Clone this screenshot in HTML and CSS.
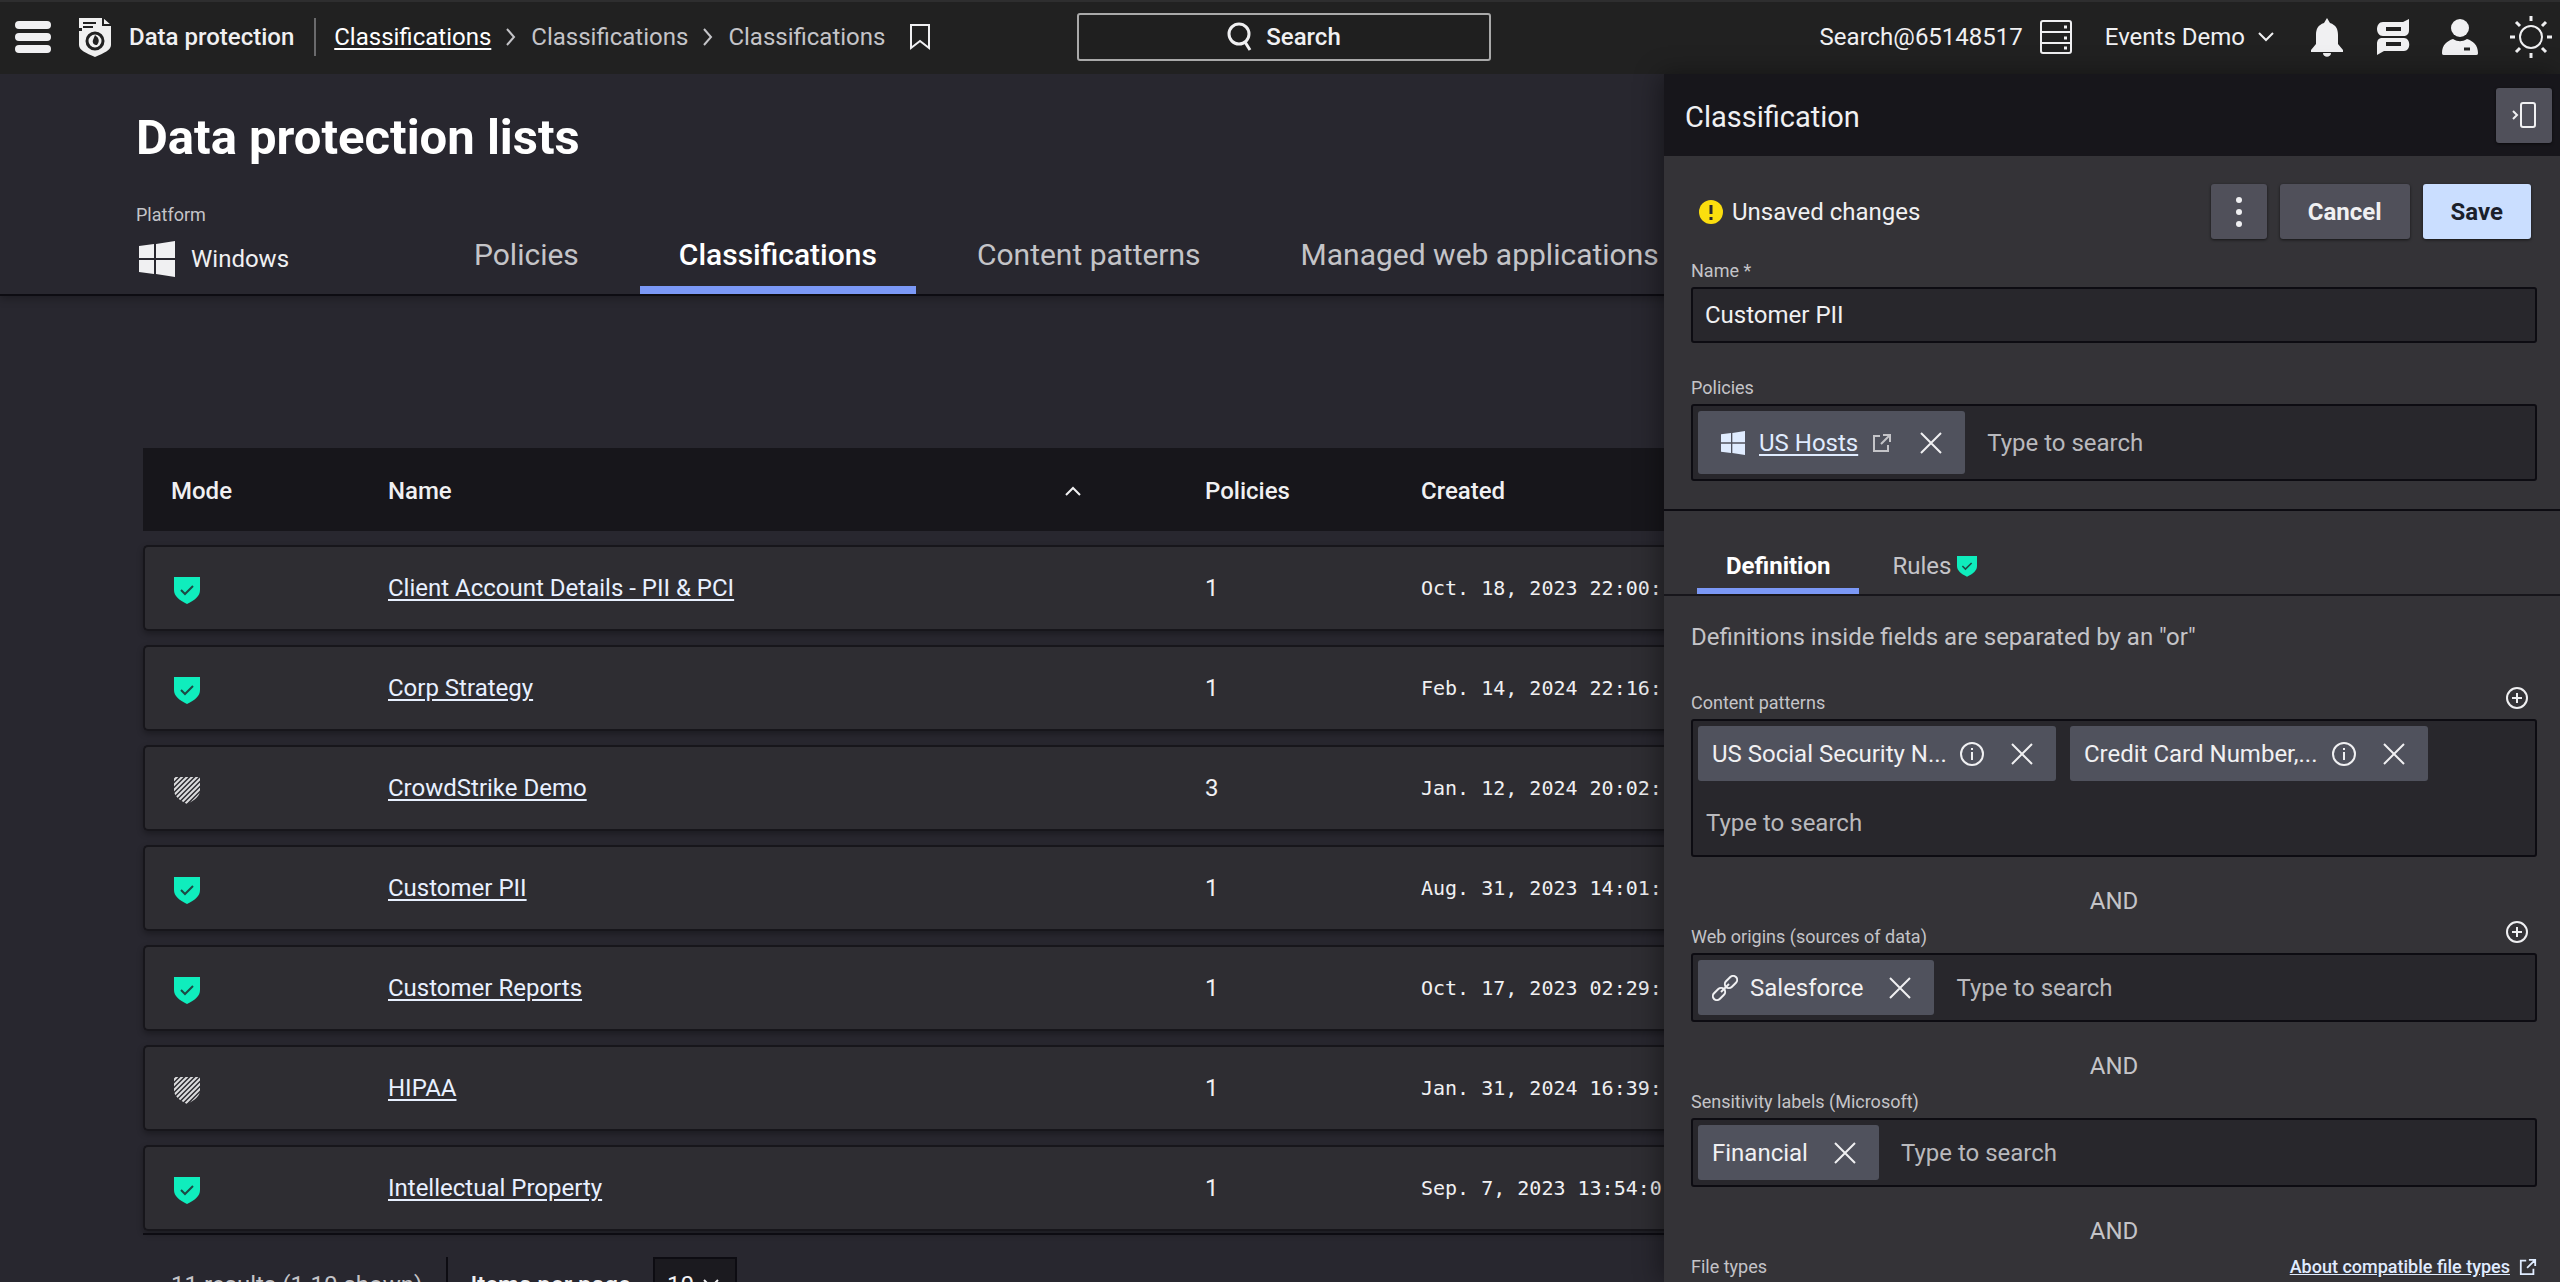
FILE: index.html
```html
<!DOCTYPE html>
<html lang="en">
<head>
<meta charset="utf-8">
<title>Data protection lists</title>
<link rel="stylesheet" href="styles.css">
</head>
<body>
<svg class="defs" aria-hidden="true">
  <symbol id="chevron" viewBox="0 0 10 20"><path d="M1 2l7 8-7 8" fill="none" stroke="currentColor" stroke-width="2"/></symbol>
  <symbol id="shield-on" viewBox="0 0 26 28"><path d="M0 1h26v13c0 6-5 10-13 14C5 24 0 20 0 14z" fill="#0fedbd"/><path d="M7 14l4 4 8-8" fill="none" stroke="#1d4a45" stroke-width="2"/></symbol>
  <symbol id="shield-off" viewBox="0 0 26 28"><clipPath id="shield-clip"><path d="M0 1h26v13c0 6-5 10-13 14C5 24 0 20 0 14z"/></clipPath><path clip-path="url(#shield-clip)" d="M-2 6L6-2M-2 11L11-2M-2 16L16-2M-2 21L21-2M-2 26L26-2M-1 30L31-2M4 30L31 3M9 30L31 8M14 30L31 13" fill="none" stroke="#dcdcde" stroke-width="2"/></symbol>
  <symbol id="windows" viewBox="0 0 36 36"><path d="M0 5l15-2v14H0zM17 3l19-3v17H17zM0 19h15v14L0 31zM17 19h19v17l-19-3z" fill="currentColor"/></symbol>
  <symbol id="external" viewBox="0 0 20 20"><path d="M8 3H2v15h14v-6M11 2h7v7M18 2l-9 9" fill="none" stroke="currentColor" stroke-width="2"/></symbol>
  <symbol id="close" viewBox="0 0 22 22"><path d="M1 1l20 20M21 1L1 21" fill="none" stroke="currentColor" stroke-width="2"/></symbol>
  <symbol id="info" viewBox="0 0 26 26"><circle cx="13" cy="13" r="11" fill="none" stroke="currentColor" stroke-width="2"/><path d="M13 11v8M13 7v2" fill="none" stroke="currentColor" stroke-width="2"/></symbol>
  <symbol id="plus" viewBox="0 0 24 24"><circle cx="12" cy="12" r="10" fill="none" stroke="currentColor" stroke-width="2"/><path d="M12 7v10M7 12h10" stroke="currentColor" stroke-width="2"/></symbol>
</svg>

<header class="topbar">
  <div class="trail">
    <button class="icon-btn" aria-label="Menu"><svg width="36" height="32"><rect width="36" height="8" rx="4" fill="currentColor"/><rect y="12" width="36" height="8" rx="4" fill="currentColor"/><rect y="24" width="36" height="8" rx="4" fill="currentColor"/></svg></button>
    <svg class="logo" width="34" height="40" viewBox="0 0 34 40"><path d="M1 1h24l8 7v20c0 5-7 8-16 12C8 36 1 33 1 28V14h3V11H1z" fill="#f0f0f0"/><path d="M25 0v8h9" fill="none" stroke="#212121" stroke-width="2"/><path d="M5 6h13M5 10h10" stroke="#212121" stroke-width="2"/><circle cx="17" cy="24" r="8" fill="none" stroke="#212121" stroke-width="3"/><path d="M17 18c4 3 5 6 2 10-3 0-5-2-4-5" fill="#212121"/></svg>
    <span class="product">Data protection</span>
    <nav class="crumbs" aria-label="Breadcrumb">
      <a href="#">Classifications</a>
      <svg width="10" height="20"><use href="#chevron"/></svg>
      <span>Classifications</span>
      <svg width="10" height="20"><use href="#chevron"/></svg>
      <span>Classifications</span>
    </nav>
    <button class="icon-btn bookmark" aria-label="Bookmark"><svg width="22" height="28" viewBox="0 0 22 28"><path d="M2 2h18v23l-9-7-9 7z" fill="none" stroke="currentColor" stroke-width="2"/></svg></button>
  </div>
  <button class="search"><svg width="26" height="30" viewBox="0 0 26 30"><circle cx="13" cy="12" r="10" fill="none" stroke="currentColor" stroke-width="3"/><path d="M19 20l5 8" stroke="currentColor" stroke-width="3"/></svg>Search</button>
  <div class="tools">
    <span>Search@65148517</span>
    <svg class="server" width="34" height="36" viewBox="0 0 34 36"><rect x="2" y="2" width="30" height="32" rx="2" fill="none" stroke="currentColor" stroke-width="2"/><path d="M2 13h30M2 24h30" stroke="currentColor" stroke-width="2"/><path d="M25 8h3M25 19h3M25 29h3" stroke="currentColor" stroke-width="3"/></svg>
    <button class="account">Events Demo<svg width="16" height="10" viewBox="0 0 16 10"><path d="M1 1l7 7 7-7" fill="none" stroke="currentColor" stroke-width="2"/></svg></button>
    <button class="icon-btn" aria-label="Notifications"><svg width="34" height="40" viewBox="0 0 34 40"><path d="M17 1l3 5c6 2 8 6 8 12v9l5 6v2H1v-2l5-6v-9c0-6 2-10 8-12zM13 36h8c0 5-8 5-8 0z" fill="currentColor"/></svg></button>
    <button class="icon-btn" aria-label="Messages"><svg width="34" height="38" viewBox="0 0 34 38"><path fill-rule="evenodd" d="M7 4h20l6-3v11c0 4-2 6-6 6H7c-8 0-8-14 0-14zm3 5v4h15V9zM6 20h22c7 0 7 13 0 13H8l-7 4V26c0-4 2-6 5-6zm4 4v4h15v-4z" fill="currentColor"/></svg></button>
    <button class="icon-btn" aria-label="Profile"><svg width="36" height="38" viewBox="0 0 36 38"><ellipse cx="18" cy="10" rx="9" ry="9" fill="currentColor"/><path d="M0 35c0-8 5-12 11-14 5 3 9 3 14 0 6 2 11 6 11 14 0 2-1 2-3 2H3c-2 0-3 0-3-2z" fill="currentColor"/><path d="M22 31h6" stroke="#212121" stroke-width="3"/></svg></button>
    <button class="icon-btn" aria-label="Theme"><svg width="42" height="42" viewBox="0 0 42 42" fill="none" stroke="currentColor" stroke-width="2"><circle cx="21" cy="21" r="11"/><path d="M21 0v5M21 37v5M0 21h5M37 21h5M6 6l4 4M32 32l4 4M6 36l4-4M32 10l4-4" stroke-width="3"/></svg></button>
  </div>
</header>

<div class="workspace">
  <main>
    <div class="page-head">
      <h1>Data protection lists</h1>
      <div class="page-nav">
        <div class="platform">
          <span class="label">Platform</span>
          <span class="platform-value"><svg width="36" height="36"><use href="#windows"/></svg>Windows</span>
        </div>
        <nav class="tabs">
          <a href="#">Policies</a>
          <a href="#" class="active">Classifications</a>
          <a href="#">Content patterns</a>
          <a href="#">Managed web applications</a>
        </nav>
      </div>
    </div>

    <div class="list">
      <table>
        <colgroup><col class="col-mode"><col class="col-name"><col class="col-policies"><col></colgroup>
        <thead>
          <tr><th>Mode</th><th><button class="sort">Name<svg width="16" height="10" viewBox="0 0 16 10"><path d="M1 9l7-7 7 7" fill="none" stroke="currentColor" stroke-width="2"/></svg></button></th><th>Policies</th><th>Created</th></tr>
        </thead>
        <tbody>
          <tr><td><svg class="shield"><use href="#shield-on"/></svg></td><td><a href="#">Client Account Details - PII &amp; PCI</a></td><td>1</td><td class="date">Oct. 18, 2023 22:00:</td></tr>
          <tr><td><svg class="shield"><use href="#shield-on"/></svg></td><td><a href="#">Corp Strategy</a></td><td>1</td><td class="date">Feb. 14, 2024 22:16:</td></tr>
          <tr><td><svg class="shield"><use href="#shield-off"/></svg></td><td><a href="#">CrowdStrike Demo</a></td><td>3</td><td class="date">Jan. 12, 2024 20:02:</td></tr>
          <tr><td><svg class="shield"><use href="#shield-on"/></svg></td><td><a href="#">Customer PII</a></td><td>1</td><td class="date">Aug. 31, 2023 14:01:</td></tr>
          <tr><td><svg class="shield"><use href="#shield-on"/></svg></td><td><a href="#">Customer Reports</a></td><td>1</td><td class="date">Oct. 17, 2023 02:29:</td></tr>
          <tr><td><svg class="shield"><use href="#shield-off"/></svg></td><td><a href="#">HIPAA</a></td><td>1</td><td class="date">Jan. 31, 2024 16:39:</td></tr>
          <tr><td><svg class="shield"><use href="#shield-on"/></svg></td><td><a href="#">Intellectual Property</a></td><td>1</td><td class="date">Sep. 7, 2023 13:54:0</td></tr>
        </tbody>
      </table>
      <div class="pager">
        <span class="results">11 results (1-10 shown)</span>
        <label for="per-page">Items per page</label>
        <span class="select"><select id="per-page"><option>10</option></select><svg width="16" height="10" viewBox="0 0 16 10"><path d="M1 1l7 7 7-7" fill="none" stroke="currentColor" stroke-width="2"/></svg></span>
      </div>
    </div>
  </main>

  <aside class="panel">
    <div class="panel-head">
      <h2>Classification</h2>
      <button class="btn square" aria-label="Collapse panel"><svg width="26" height="26" viewBox="0 0 26 26" fill="none" stroke="currentColor" stroke-width="2"><rect x="10" y="1" width="14" height="24" rx="2"/><path d="M2 9l4 4-4 4"/></svg></button>
    </div>

    <section class="summary">
      <div class="actions">
        <span class="unsaved"><svg width="26" height="26" viewBox="0 0 26 26"><circle cx="13" cy="13" r="12" fill="#fbde0e"/><path d="M13 6v9M13 18v3" stroke="#28272c" stroke-width="3"/></svg>Unsaved changes</span>
        <button class="btn square" aria-label="More actions"><svg width="8" height="32"><circle cx="4" cy="4" r="3" fill="currentColor"/><circle cx="4" cy="16" r="3" fill="currentColor"/><circle cx="4" cy="28" r="3" fill="currentColor"/></svg></button>
        <button class="btn">Cancel</button>
        <button class="btn primary">Save</button>
      </div>
      <div class="label-row"><label class="label" for="name">Name *</label></div>
      <input class="box text" id="name" value="Customer PII">
      <div class="label-row policies-label"><label class="label" for="policies">Policies</label></div>
      <div class="box">
        <span class="chip tall"><svg width="24" height="24"><use href="#windows"/></svg><a href="#">US Hosts</a><svg class="muted" width="20" height="20"><use href="#external"/></svg><button class="icon-btn remove" aria-label="Remove US Hosts"><svg width="22" height="22"><use href="#close"/></svg></button></span>
        <input id="policies" placeholder="Type to search">
      </div>
    </section>

    <nav class="panel-tabs">
      <a href="#" class="active">Definition</a>
      <a href="#">Rules<svg width="20" height="22"><use href="#shield-on"/></svg></a>
    </nav>

    <section class="definition">
      <p>Definitions inside fields are separated by an "or"</p>

      <div class="label-row"><label class="label" for="patterns">Content patterns</label><button class="icon-btn add" aria-label="Add content pattern"><svg width="24" height="24"><use href="#plus"/></svg></button></div>
      <div class="box">
        <span class="chip wide"><span class="chip-text">US Social Security N...</span><svg width="26" height="26"><use href="#info"/></svg><button class="icon-btn remove" aria-label="Remove US Social Security"><svg width="22" height="22"><use href="#close"/></svg></button></span>
        <span class="chip wide"><span class="chip-text">Credit Card Number,...</span><svg width="26" height="26"><use href="#info"/></svg><button class="icon-btn remove" aria-label="Remove Credit Card Number"><svg width="22" height="22"><use href="#close"/></svg></button></span>
        <input id="patterns" placeholder="Type to search">
      </div>
      <div class="and">AND</div>

      <div class="label-row"><label class="label" for="origins">Web origins (sources of data)</label><button class="icon-btn add" aria-label="Add web origin"><svg width="24" height="24"><use href="#plus"/></svg></button></div>
      <div class="box">
        <span class="chip"><svg width="26" height="26" viewBox="0 0 26 26" fill="none" stroke="currentColor" stroke-width="2"><rect x="-4" y="-7" width="8" height="14" rx="4" transform="translate(19 7) rotate(45)"/><rect x="-4" y="-7" width="8" height="14" rx="4" transform="translate(7 19) rotate(45)"/><path d="M9 17l8-8"/></svg>Salesforce<button class="icon-btn remove" aria-label="Remove Salesforce"><svg width="22" height="22"><use href="#close"/></svg></button></span>
        <input id="origins" placeholder="Type to search">
      </div>
      <div class="and">AND</div>

      <div class="label-row"><label class="label" for="labels">Sensitivity labels (Microsoft)</label></div>
      <div class="box">
        <span class="chip">Financial<button class="icon-btn remove" aria-label="Remove Financial"><svg width="22" height="22"><use href="#close"/></svg></button></span>
        <input id="labels" placeholder="Type to search">
      </div>
      <div class="and">AND</div>

      <div class="label-row"><span class="label">File types</span><span class="about"><a href="#">About compatible file types</a><svg width="18" height="18"><use href="#external"/></svg></span></div>
    </section>
  </aside>
</div>
</body>
</html>
```
FILE: styles.css
```css
* { box-sizing: border-box; }

body {
  margin: 0;
  height: 100vh;
  display: flex;
  flex-direction: column;
  overflow: hidden;
  background: #28272f;
  color: #f0f0f2;
  font: 24px/32px Roboto, "Liberation Sans", sans-serif;
}

svg { display: block; flex: none; }
.defs { position: absolute; width: 0; height: 0; }
button, input, select { font: inherit; color: inherit; }
button { cursor: pointer; }
a { color: inherit; }
h1, h2, p { margin: 0; }
.icon-btn { display: block; padding: 0; border: 0; background: none; }
.label { font-size: 18px; line-height: 24px; color: #c4c4c8; }

/* Top bar */
.topbar {
  display: grid;
  grid-template-columns: 1fr 414px 1fr;
  align-items: center;
  flex: none;
  height: 74px;
  padding: 0 8px 2px 15px;
  background: #212121;
  border-top: 2px solid #2e2e2f;
  white-space: nowrap;
}
.trail { display: flex; align-items: center; }
.logo { margin-left: 27px; }
.product {
  margin-left: 17px;
  padding-right: 20px;
  border-right: 2px solid #6a6a6c;
  line-height: 38px;
  font-weight: 500;
}
.crumbs { display: flex; align-items: center; gap: 15px; margin-left: 18px; color: #c4c4c8; }
.crumbs a { color: #fff; text-underline-offset: 3px; }
.bookmark { margin-left: 24px; }
.search {
  display: flex;
  align-items: center;
  justify-content: center;
  gap: 14px;
  height: 48px;
  border: 2px solid #a9a9a9;
  border-radius: 3px;
  background: #1f1f1f;
  font-weight: 500;
}
.tools { display: flex; align-items: center; justify-content: flex-end; gap: 32px; }
.server { margin-left: -16px; }
.account { display: flex; align-items: center; gap: 13px; padding: 0 4px 0 0; border: 0; background: none; }

/* Main page */
.workspace { position: relative; flex: 1; min-height: 0; }
main { height: 100%; overflow: hidden; }
.page-head {
  padding: 36px 0 0 136px;
  border-bottom: 2px solid #0d0c12;
  box-shadow: 0 3px 8px rgba(0, 0, 0, .25);
}
h1 { font-size: 49px; line-height: 56px; font-weight: 700; color: #fff; }
.page-nav { display: flex; align-items: flex-end; margin-top: 37px; }
.platform { display: flex; flex-direction: column; gap: 14px; width: 299px; padding-bottom: 17px; }
.platform-value { display: flex; align-items: center; gap: 16px; line-height: 36px; padding-left: 3px; }
.tabs { display: flex; gap: 22px; font-size: 30px; line-height: 36px; white-space: nowrap; }
.tabs a {
  padding: 0 39px 13px;
  border-bottom: 8px solid transparent;
  color: #c4c4c8;
  text-decoration: none;
}
.tabs .active { color: #fff; font-weight: 500; border-color: #7b98f6; }

/* List */
.list { padding: 152px 48px 0 143px; }
table {
  width: 100%;
  margin: -14px 0;
  table-layout: fixed;
  border-collapse: separate;
  border-spacing: 0 14px;
}
.col-mode { width: 217px; }
.col-name { width: 817px; }
.col-policies { width: 216px; }
th { height: 83px; padding: 2px 0 0 28px; background: #17161b; text-align: left; font-weight: 500; }
.sort {
  display: flex;
  align-items: center;
  justify-content: space-between;
  width: 100%;
  padding: 0 96px 0 0;
  border: 0;
  background: none;
}
tbody tr { border-radius: 5px; box-shadow: 0 3px 6px rgba(0, 0, 0, .3); }
td {
  height: 86px;
  padding: 0 0 0 28px;
  background: #2e2d32;
  border: 2px solid #17161b;
  border-width: 2px 0;
}
td:first-child { padding: 4px 0 0 29px; border-left-width: 2px; border-radius: 5px 0 0 5px; }
td a { color: #e8f0ff; text-underline-offset: 3px; }
.date { font: 20px/32px "DejaVu Sans Mono", "Liberation Mono", monospace; }
.shield { width: 26px; height: 28px; }
.pager {
  display: flex;
  align-items: center;
  gap: 22px;
  position: relative;
  margin-top: 2px;
  padding: 22px 0 20px 28px;
  border-top: 2px solid #0d0c12;
}
.pager label { font-weight: 500; }
.results { padding-right: 24px; border-right: 2px solid #0d0c12; line-height: 56px; color: #c4c4c8; }
.select { position: relative; }
.select select {
  appearance: none;
  width: 84px;
  height: 56px;
  padding: 0 12px;
  border: 2px solid #0d0c12;
  background: #1b1a1f;
}
.select svg { position: absolute; right: 18px; top: 22px; pointer-events: none; }

/* Side panel */
.panel {
  position: absolute;
  top: 0;
  right: 0;
  bottom: 0;
  width: 35%;
  overflow: hidden;
  background: #343337;
  box-shadow: -4px 0 24px rgba(0, 0, 0, .4);
}
.panel-head {
  display: flex;
  align-items: center;
  justify-content: space-between;
  height: 82px;
  padding: 0 8px 0 21px;
  background: #17161b;
}
h2 { padding-top: 3px; font-size: 29px; line-height: 36px; font-weight: 400; }
.btn {
  height: 55px;
  padding: 0 28px;
  border: 0;
  border-radius: 3px;
  background: #50505a;
  box-shadow: 0 1px 3px rgba(0, 0, 0, .6);
  font-weight: 700;
}
.btn.square { display: flex; align-items: center; justify-content: center; width: 56px; padding: 0; }
.btn.primary { background: #cadeff; color: #1b1f2b; }
.summary { padding: 28px 23px 28px 27px; border-bottom: 2px solid #0d0c12; }
.actions { display: flex; gap: 13px; margin-bottom: 20px; padding: 0 6px 0 7px; }
.unsaved { display: flex; align-items: center; gap: 8px; margin-right: auto; }
.label-row { display: flex; justify-content: space-between; height: 24px; margin-bottom: 4px; }
.policies-label { margin-top: 33px; }
.add { height: 24px; margin: -5px 8px 0 0; }
.box {
  display: flex;
  flex-wrap: wrap;
  gap: 14px;
  width: 100%;
  padding: 5px;
  border: 2px solid #0d0c12;
  border-radius: 3px;
  background: #28272c;
}
.box.text { height: 56px; padding: 0 12px; }
.box input {
  flex: 1;
  min-width: 240px;
  height: 55px;
  align-self: center;
  padding: 0 8px;
  border: 0;
  background: none;
}
input::placeholder { color: #b9b9bd; opacity: 1; }
.chip {
  display: flex;
  align-items: center;
  gap: 12px;
  height: 55px;
  padding: 0 23px 0 14px;
  border-radius: 3px;
  background: #50525d;
  white-space: nowrap;
}
.chip.tall { height: 63px; gap: 14px; padding-left: 23px; color: #e0ecff; }
.chip.wide { width: 358px; }
.chip-text { flex: 1; }
.chip a { text-underline-offset: 3px; }
.remove { margin-left: 14px; color: #f0f0f2; }
.muted { color: #c4c4c8; }
.panel-tabs { display: flex; gap: 4px; height: 85px; padding: 0 33px; border-bottom: 2px solid #17161b; }
.panel-tabs a {
  display: flex;
  align-items: center;
  gap: 6px;
  padding: 39px 29px 6px;
  border-bottom: 6px solid transparent;
  color: #c4c4c8;
  text-decoration: none;
}
.panel-tabs .active { color: #fff; font-weight: 700; border-color: #7b98f6; border-radius: 3px 3px 0 0; }
.definition { padding: 25px 23px 0 27px; }
.definition p { margin-bottom: 38px; color: #c4c4c8; }
.and { padding: 28px 0 8px; text-align: center; color: #c4c4c8; }
.about { display: flex; align-items: center; gap: 9px; font-size: 18px; line-height: 24px; font-weight: 500; color: #e0ecff; }
```
